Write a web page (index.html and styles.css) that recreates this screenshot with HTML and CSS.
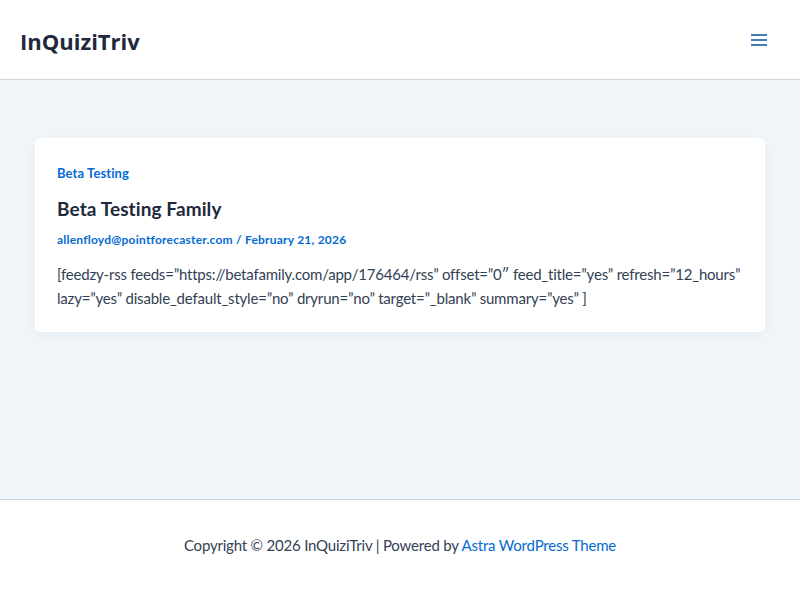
FILE: index.html
```html
<!DOCTYPE html>
<html lang="en-US">
<head>
    <meta charset="UTF-8">
    <meta name="viewport" content="width=device-width, initial-scale=1.0">
    <title>InQuiziTriv</title>
    <link rel="stylesheet" href="styles.css">
</head>
<body>
    <header class="site-header">
        <a class="site-title" href="#">InQuiziTriv</a>
        <button class="menu-toggle" aria-label="Main Menu">
            <svg width="16" height="12" viewBox="0 0 16 12">
                <rect x="0" y="0" width="16" height="2"></rect>
                <rect x="0" y="5" width="16" height="2"></rect>
                <rect x="0" y="10" width="16" height="2"></rect>
            </svg>
        </button>
    </header>

    <main class="site-content">
        <article class="post-card">
            <a class="post-cat" href="#">Beta Testing</a>
            <h2 class="post-title">Beta Testing Family</h2>
            <div class="post-meta">
                <a href="#">allenfloyd@pointforecaster.com</a> / <span>February 21, 2026</span>
            </div>
            <p class="post-excerpt">[feedzy-rss feeds=&#8221;https://betafamily.com/app/176464/rss&#8221; offset=&#8221;0&#8243; feed_title=&#8221;yes&#8221; refresh=&#8221;12_hours&#8221; lazy=&#8221;yes&#8221; disable_default_style=&#8221;no&#8221; dryrun=&#8221;no&#8221; target=&#8221;_blank&#8221; summary=&#8221;yes&#8221; ]</p>
        </article>
    </main>

    <footer class="site-footer">
        <p>Copyright &copy; 2026 InQuiziTriv | Powered by <a href="#">Astra WordPress Theme</a></p>
    </footer>
</body>
</html>
```

FILE: styles.css
```css
body {
    font-family: Lato, "Open Sans", sans-serif;
    margin: 0;
    padding: 0;
    background-color: #f0f5fa;
    color: #334155;
    font-size: 15px;
    letter-spacing: -0.2px;
}
a {
    color: #046bd2;
    text-decoration: none;
}
.site-header {
    height: 79px;
    background: white;
    border-bottom: 1px solid #d1d5db;
    display: flex;
    align-items: center;
    justify-content: space-between;
    padding: 0 20px;
}
.site-title {
    font-family: "Open Sans", sans-serif;
    color: #1e293b;
    font-size: 22px;
    font-weight: 700;
    letter-spacing: 0;
    margin-top: 2px;
}
.menu-toggle {
    background: none;
    border: none;
    padding: 0 13px 0 0;
    margin-top: 1px;
    cursor: pointer;
    display: flex;
}
.menu-toggle svg {
    fill: #3d7db5;
}
.site-content {
    height: 419px;
    padding: 58px 35px 0;
    box-sizing: border-box;
}
.post-card {
    background: white;
    border-radius: 6px;
    box-shadow: 0 4px 14px rgba(0, 0, 0, 0.04);
    padding: 24px 22px 22px;
}
.post-cat {
    display: block;
    font-size: 13px;
    font-weight: 700;
    line-height: 22px;
    letter-spacing: 0.1px;
}
.post-title {
    color: #1e293b;
    font-size: 19px;
    font-weight: 700;
    margin: 12px 0 0;
    line-height: 26px;
    letter-spacing: 0.1px;
}
.post-meta {
    color: #046bd2;
    font-size: 12px;
    font-weight: 700;
    margin-top: 9px;
    line-height: 18px;
    letter-spacing: 0.22px;
}
.post-excerpt {
    margin: 13px 0 0;
    line-height: 24px;
}
.site-footer {
    background: white;
    border-top: 1px solid #d1d5db;
    height: 101px;
    text-align: center;
}
.site-footer p {
    margin: 0;
    padding-top: 34px;
    line-height: 22px;
}
```
